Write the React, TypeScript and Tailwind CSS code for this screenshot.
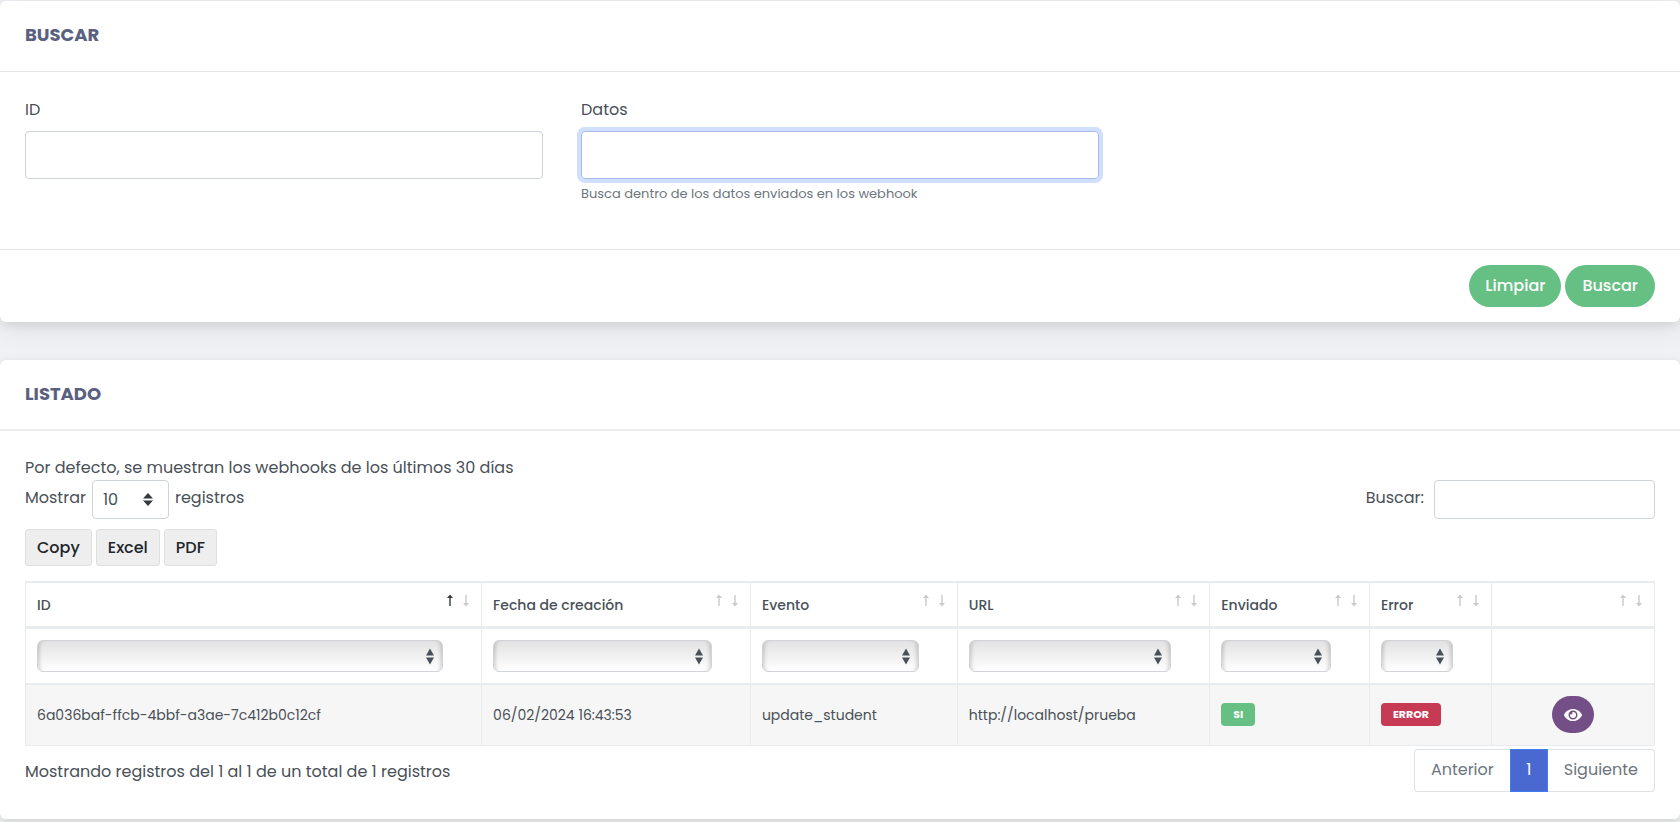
import React, { useState } from "react";

interface Column {
  id: string;
  label: string;
  width: string;
  filter: boolean;
}

interface WebhookRow {
  id: string;
  date: string;
  event: string;
  url: string;
}

const columns: Column[] = [
  { id: "id", label: "ID", width: "w-[28%]", filter: true },
  { id: "date", label: "Fecha de creación", width: "w-[16.5%]", filter: true },
  { id: "event", label: "Evento", width: "w-[12.7%]", filter: true },
  { id: "url", label: "URL", width: "w-[15.5%]", filter: true },
  { id: "sent", label: "Enviado", width: "w-[9.8%]", filter: true },
  { id: "error", label: "Error", width: "w-[7.5%]", filter: true },
  { id: "actions", label: "", width: "w-[10%]", filter: false },
];

const rows: WebhookRow[] = [
  {
    id: "6a036baf-ffcb-4bbf-a3ae-7c412b0c12cf",
    date: "06/02/2024 16:43:53",
    event: "update_student",
    url: "http://localhost/prueba",
  },
];

function SortArrows({ active }: { active: boolean }) {
  return (
    <span className="absolute top-[11px] right-[11px] flex gap-2 text-[#c8cacc]">
      <svg className={active ? "text-[#343a40]" : ""} width="8" height="13" viewBox="0 0 8 13" fill="currentColor">
        <path d="M4 0.5L7 4H4.7V12H3.3V4H1Z" />
      </svg>
      <svg width="8" height="13" viewBox="0 0 8 13" fill="currentColor">
        <path d="M4 12.5L7 9H4.7V1H3.3V9H1Z" />
      </svg>
    </span>
  );
}

function EyeIcon() {
  return (
    <svg width="18" height="16" viewBox="0 0 576 512" fill="currentColor">
      <path d="M572.52 241.4C518.29 135.59 410.93 64 288 64S57.68 135.64 3.48 241.41a32.35 32.35 0 0 0 0 29.19C57.71 376.41 165.07 448 288 448s230.32-71.64 284.52-177.41a32.35 32.35 0 0 0 0-29.19zM288 400a144 144 0 1 1 144-144 143.93 143.93 0 0 1-144 144zm0-240a95.31 95.31 0 0 0-25.31 3.79 47.85 47.85 0 0 1-66.9 66.9A95.78 95.78 0 1 0 288 160z" />
    </svg>
  );
}

export default function App() {
  const [id, setId] = useState("");
  const [data, setData] = useState("");

  const clear = () => {
    setId("");
    setData("");
  };

  return (
    <div className="min-h-screen bg-[#eff1f4] pt-px pb-6 font-['Poppins','Inter',sans-serif] text-base leading-6 text-[#495057]">
      {/* Search card */}
      <form
        onSubmit={(e) => e.preventDefault()}
        className="mb-[38px] rounded-md bg-white shadow-[0_8px_30px_rgba(0,0,0,0.06),0_3px_12px_rgba(0,0,0,0.1)]"
      >
        <div className="border-b border-[#e2e5f0] px-[25px] pt-[22px] pb-6">
          <h2 className="text-lg leading-6 font-bold text-[#596080]">BUSCAR</h2>
        </div>
        <div className="grid grid-cols-3 gap-x-[38px] px-[25px] pt-[26px] pb-[45px]">
          <div>
            <label htmlFor="id" className="mb-[9px] block">ID</label>
            <input
              id="id"
              value={id}
              onChange={(e) => setId(e.target.value)}
              className="block h-12 w-full rounded border border-[#ced4da] px-3 outline-none"
            />
          </div>
          <div>
            <label htmlFor="data" className="mb-[9px] block">Datos</label>
            <input
              id="data"
              value={data}
              onChange={(e) => setData(e.target.value)}
              className="block h-12 w-full rounded border border-[#a9b9ee] px-3 ring-4 ring-[#cfdffc] outline-none"
            />
            <p className="mt-[5px] text-[13px] leading-5 text-[#6c757d]">Busca dentro de los datos enviados en los webhook</p>
          </div>
        </div>
        <div className="flex justify-end gap-1 border-t border-[#e2e5f0] px-[25px] py-[15px] font-medium text-white">
          <button type="button" onClick={clear} className="h-[42px] rounded-full bg-[#67c083] px-4">Limpiar</button>
          <button type="submit" className="h-[42px] rounded-full bg-[#67c083] px-[17px]">Buscar</button>
        </div>
      </form>

      {/* Results card */}
      <section className="rounded-md bg-white pb-[27px] shadow-[0_3px_10px_rgba(0,0,0,0.14)]">
        <div className="border-b-2 border-[#ebedf2] px-[25px] pt-[22px] pb-[23px]">
          <h2 className="text-lg leading-6 font-bold text-[#596080]">LISTADO</h2>
        </div>
        <div className="px-[25px] pt-[25px]">
          <p>Por defecto, se muestran los webhooks de los últimos 30 días</p>
          <div className="flex items-start justify-between leading-9">
            <div className="flex gap-1.5">
              <label htmlFor="length">Mostrar</label>
              <span className="relative">
                <select id="length" className="block h-[39px] w-[77px] appearance-none rounded border border-[#ced4da] bg-white px-2.5">
                  <option>10</option>
                  <option>25</option>
                  <option>50</option>
                </select>
                <svg className="pointer-events-none absolute top-[13px] right-4 text-[#343a40]" width="10" height="13" viewBox="0 0 10 13" fill="currentColor">
                  <path d="M0 5.5L5 0L10 5.5ZM0 7.5H10L5 13Z" />
                </svg>
              </span>
              <span>registros</span>
            </div>
            <div className="flex gap-2.5">
              <label htmlFor="search">Buscar:</label>
              <input id="search" type="search" className="h-[39px] w-[221px] rounded border border-[#ced4da] px-2.5 outline-none" />
            </div>
          </div>

          <div className="mt-2.5 mb-[15px] flex gap-1 font-medium text-[#212529]">
            <button className="h-[37px] rounded-[3px] border border-[#dedfe0] bg-[#eeeeee] px-[11px]">Copy</button>
            <button className="h-[37px] rounded-[3px] border border-[#dedfe0] bg-[#eeeeee] px-[11px]">Excel</button>
            <button className="h-[37px] rounded-[3px] border border-[#dedfe0] bg-[#eeeeee] px-[11px]">PDF</button>
          </div>

          <table className="w-full table-fixed border-collapse border border-[#e9ecef] text-left text-sm">
            <thead>
              <tr className="h-[45px] border-t-2 border-b-3 border-[#e9ecef]">
                {columns.map((col, i) => (
                  <th key={col.id} className={`relative border-x border-[#e9ecef] px-[11px] pt-0.5 font-medium ${col.width}`}>
                    {col.label}
                    <SortArrows active={i === 0} />
                  </th>
                ))}
              </tr>
              <tr className="h-[57px] border-b-2 border-[#e9ecef]">
                {columns.map((col) => (
                  <th key={col.id} className="border-x border-[#e9ecef] pr-[38px] pl-[11px]">
                    {col.filter && (
                      <span className="relative block">
                        <select
                          aria-label={col.label}
                          className="block h-8 w-full appearance-none rounded-md border border-[#d0d4d8] bg-linear-to-b from-[#e2e2e2] to-white px-2 shadow-[inset_5px_0_4px_-4px_rgba(0,0,0,0.2),inset_-5px_0_4px_-4px_rgba(0,0,0,0.2)]"
                        >
                          <option></option>
                        </select>
                        <svg className="pointer-events-none absolute top-2 right-[9px]" width="8" height="17" viewBox="0 0 8 17" fill="currentColor">
                          <path d="M0 7.5L4 0.5L8 7.5ZM0 9.5H8L4 16.5Z" />
                        </svg>
                      </span>
                    )}
                  </th>
                ))}
              </tr>
            </thead>
            <tbody>
              {rows.map((row) => (
                <tr key={row.id} className="h-[61px] bg-[#f6f6f6]">
                  <td className="border border-[#e9ecef] px-[11px]">{row.id}</td>
                  <td className="border border-[#e9ecef] px-[11px]">{row.date}</td>
                  <td className="border border-[#e9ecef] px-[11px]">{row.event}</td>
                  <td className="border border-[#e9ecef] px-[11px]">{row.url}</td>
                  <td className="border border-[#e9ecef] px-[11px]">
                    <span className="inline-block rounded bg-[#67c083] px-3 text-[11px] leading-[23px] font-bold text-white">SI</span>
                  </td>
                  <td className="border border-[#e9ecef] px-[11px]">
                    <span className="inline-block rounded bg-[#c63a54] px-3 text-[11px] leading-[23px] font-bold text-white">ERROR</span>
                  </td>
                  <td className="border border-[#e9ecef] px-[11px]">
                    <button aria-label="Ver" className="mx-auto flex h-[37px] w-[42px] items-center justify-center rounded-full bg-[#744e86] text-white">
                      <EyeIcon />
                    </button>
                  </td>
                </tr>
              ))}
            </tbody>
          </table>

          <div className="flex items-start justify-between pt-[3px]">
            <p className="pt-[11px]">Mostrando registros del 1 al 1 de un total de 1 registros</p>
            <nav className="flex h-[43px] text-[#6c757d]">
              <button className="rounded-l border border-r-0 border-[#dee2e6] px-4">Anterior</button>
              <button className="w-[38px] border border-[#3f7df0] bg-[#4969d0] text-white">1</button>
              <button className="rounded-r border border-l-0 border-[#dee2e6] px-4">Siguiente</button>
            </nav>
          </div>
        </div>
      </section>
    </div>
  );
}
